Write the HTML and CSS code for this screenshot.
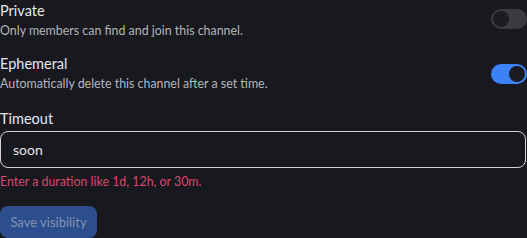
FILE: index.html
```html
<!DOCTYPE html>
<html lang="en">
<head>
    <meta charset="UTF-8">
    <meta name="viewport" content="width=527, height=238, initial-scale=1.0">
    <title>Channel visibility</title>
    <link rel="stylesheet" href="styles.css">
</head>
<body>
    <div class="settings">
        <div class="option-row">
            <div class="option-text">
                <div class="option-title">Private</div>
                <div class="option-desc">Only members can find and join this channel.</div>
            </div>
            <span class="toggle"><span class="knob"></span></span>
        </div>
        <div class="option-row ephemeral">
            <div class="option-text">
                <div class="option-title">Ephemeral</div>
                <div class="option-desc">Automatically delete this channel after a set time.</div>
            </div>
            <span class="toggle on"><span class="knob"></span></span>
        </div>
        <label class="field-label" for="timeout">Timeout</label>
        <input class="field-input" id="timeout" type="text" value="soon">
        <div class="field-error">Enter a duration like 1d, 12h, or 30m.</div>
        <button class="save-button" disabled>Save visibility</button>
    </div>
</body>
</html>
```

FILE: styles.css
```css
body {
    margin: 0;
    padding: 0;
    overflow: hidden;
    background-color: #18191e;
    font-family: 'Lato', 'Noto Sans', sans-serif;
    color: #e4e4e7;
}

.settings {
    display: flex;
    flex-direction: column;
    width: 527px;
}

.option-row {
    display: flex;
    align-items: flex-start;
    justify-content: space-between;
}

.option-row.ephemeral {
    margin-top: 12px;
}

.option-text {
    padding-top: 2px;
}

.option-title {
    font-size: 14.5px;
    line-height: 18px;
    color: #e6e6e9;
}

.option-desc {
    margin-top: 1px;
    font-size: 12.4px;
    line-height: 20px;
    color: #b4b5ba;
}

.toggle {
    display: flex;
    align-items: center;
    margin-top: 9px;
    width: 36px;
    height: 20px;
    box-sizing: border-box;
    padding: 2px;
    border-radius: 10px;
    background-color: #3a3b40;
}

.toggle .knob {
    width: 16px;
    height: 16px;
    border-radius: 50%;
    background-color: #1b1c21;
}

.toggle.on {
    justify-content: flex-end;
    margin-top: 11px;
    background-color: #3b82f6;
}

.field-label {
    margin-top: 16px;
    font-size: 14.5px;
    line-height: 18px;
    color: #e6e6e9;
}

.field-input {
    margin-top: 3px;
    width: 526px;
    height: 37px;
    box-sizing: border-box;
    padding: 0 12px;
    border: 1px solid #d4d4d8;
    border-radius: 8px;
    background-color: #18191e;
    color: #e4e4e7;
    font-family: inherit;
    font-size: 14px;
    outline: none;
}

.field-error {
    margin-top: 5px;
    font-size: 12.4px;
    line-height: 18px;
    color: #d9476d;
}

.save-button {
    align-self: flex-start;
    margin-top: 15px;
    width: 97px;
    height: 32px;
    padding: 0;
    border: none;
    border-radius: 8px;
    background-color: #2c4e8e;
    color: #8192ae;
    font-family: inherit;
    font-size: 13px;
}
```
